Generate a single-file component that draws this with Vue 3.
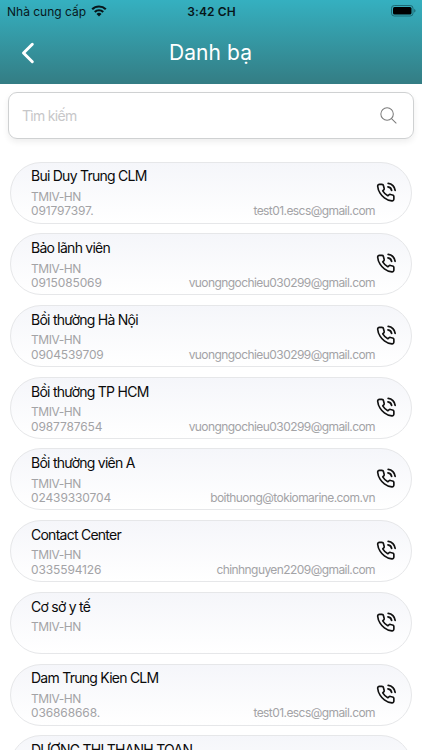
<template>
  <div class="screen">
    <header class="header">
      <div class="status-bar">
        <div class="carrier">
          <span class="carrier-name">Nhà cung cấp</span>
          <svg class="wifi" width="16" height="12" viewBox="0 0 16 12">
            <g fill="none" stroke="#07161a" stroke-width="2.2">
              <path d="M1.2 4.3a9.7 9.7 0 0 1 13.6 0"></path>
              <path d="M3.8 7a5.9 5.9 0 0 1 8.4 0"></path>
            </g>
            <path d="M8 11.4L5.5 8.9a3.6 3.6 0 0 1 5 0z" fill="#07161a"></path>
          </svg>
        </div>
        <span class="time">3:42 CH</span>
        <div class="battery">
          <svg width="25" height="12" viewBox="0 0 25 12">
            <rect x="0.5" y="0.5" width="21.5" height="10.5" rx="2.8" fill="none" stroke="#1d6a75"></rect>
            <rect x="2" y="2" width="18.5" height="7.5" rx="1.5" fill="#000"></rect>
            <path d="M23.2 4v3.6c.9-.3 1.3-1 1.3-1.8s-.4-1.5-1.3-1.8z" fill="#1d6a75"></path>
          </svg>
        </div>
      </div>
      <div class="nav-bar">
        <button class="back-btn" aria-label="Back">
          <svg width="14" height="22" viewBox="0 0 14 22" fill="none" stroke="#fff">
            <path stroke-width="3" stroke-linecap="round" stroke-linejoin="round" d="M11.3 2.3L2.5 11l8.8 8.7"></path>
          </svg>
        </button>
        <h1>Danh bạ</h1>
      </div>
    </header>

    <div class="search-box">
      <input v-model="searchTerm" type="text" placeholder="Tìm kiếm" />
      <svg class="search-icon" width="17" height="17" viewBox="0 0 18 18" fill="none" stroke="#7c7c7c" stroke-width="1.1">
        <circle cx="7.5" cy="7.5" r="6.6"></circle>
        <path stroke-linecap="round" d="M12.2 12.2l4.8 4.8"></path>
      </svg>
    </div>

    <ul class="contact-list">
      <li v-for="contact in filteredContacts" :key="contact.name" class="contact">
        <div class="info">
          <p class="name">{{ contact.name }}</p>
          <p class="branch">{{ contact.branch }}</p>
          <div class="details">
            <span class="phone">{{ contact.phone }}</span>
            <span class="email">{{ contact.email }}</span>
          </div>
        </div>
        <button class="call-btn" aria-label="Call">
          <svg width="22" height="22" viewBox="0 0 22 22" fill="none" stroke="#111" stroke-width="1.8" stroke-linecap="round" stroke-linejoin="round">
            <path transform="translate(1.2 .9) scale(.92)" d="M19.2 15.2v2.4a1.9 1.9 0 0 1-2.1 1.9c-3-.3-5.8-1.4-8.2-3.3a18 18 0 0 1-4.7-5.1A16 16 0 0 1 1.6 3.6 1.9 1.9 0 0 1 3.5 1.6h2.6a1.9 1.9 0 0 1 1.9 1.6c.1.8.3 1.6.6 2.4a1.9 1.9 0 0 1-.4 2L7.1 8.7a14.5 14.5 0 0 0 5.5 5.3l1.1-1a1.9 1.9 0 0 1 2-.4c.6.2 1.2.4 1.9.5a1.9 1.9 0 0 1 1.6 2.1z"></path>
            <path d="M13.2 1.4a7.5 7.5 0 0 1 6.9 6.9M13 4.8a4.2 4.2 0 0 1 3.6 3.6"></path>
          </svg>
        </button>
      </li>
    </ul>
  </div>
</template>

<script setup>
import { ref, computed } from 'vue';

const searchTerm = ref('');

const contacts = ref([
  { name: 'Bui Duy Trung CLM', branch: 'TMIV-HN', phone: '091797397.', email: 'test01.escs@gmail.com' },
  { name: 'Bảo lãnh viên', branch: 'TMIV-HN', phone: '0915085069', email: 'vuongngochieu030299@gmail.com' },
  { name: 'Bồi thường Hà Nội', branch: 'TMIV-HN', phone: '0904539709', email: 'vuongngochieu030299@gmail.com' },
  { name: 'Bồi thường TP HCM', branch: 'TMIV-HN', phone: '0987787654', email: 'vuongngochieu030299@gmail.com' },
  { name: 'Bồi thường viên A', branch: 'TMIV-HN', phone: '02439330704', email: 'boithuong@tokiomarine.com.vn' },
  { name: 'Contact Center', branch: 'TMIV-HN', phone: '0335594126', email: 'chinhnguyen2209@gmail.com' },
  { name: 'Cơ sở y tế', branch: 'TMIV-HN', phone: '', email: '' },
  { name: 'Dam Trung Kien CLM', branch: 'TMIV-HN', phone: '036868668.', email: 'test01.escs@gmail.com' },
  { name: 'DƯƠNG THỊ THANH TOAN', branch: 'TMIV-HN', phone: '', email: '' }
]);

const filteredContacts = computed(() => {
  const term = searchTerm.value.trim().toLowerCase();
  return contacts.value.filter((contact) => contact.name.toLowerCase().includes(term));
});
</script>

<style>
body {
  overflow: hidden;
}
</style>

<style scoped>
.screen {
  display: flex;
  flex-direction: column;
  height: 750px;
  overflow: hidden;
  background: #fff;
  font-family: Inter, "Liberation Sans", sans-serif;
  color: #111;
}

button {
  padding: 0;
  border: none;
  background: none;
  cursor: pointer;
}

svg {
  display: block;
}

.header {
  flex: none;
  height: 84px;
  background: linear-gradient(#35b0c0, #347d84);
}

.status-bar {
  display: grid;
  grid-template-columns: 1fr auto 1fr;
  align-items: center;
  height: 22px;
  padding: 0 6px 0 7px;
  color: #07161a;
}

.carrier {
  display: flex;
  align-items: center;
  gap: 5px;
}

.carrier-name {
  font-size: 12px;
}

.time {
  font-size: 12px;
  font-weight: 600;
  letter-spacing: 0.1px;
}

.battery {
  display: flex;
  justify-content: flex-end;
}

.nav-bar {
  display: grid;
  grid-template-columns: 40px 1fr 40px;
  align-items: center;
  height: 61px;
  padding: 0 22px 0 21px;
}

h1 {
  margin: 0;
  color: #fff;
  font-size: 21px;
  font-weight: 400;
  letter-spacing: 0.1px;
  text-align: center;
}

.search-box {
  display: flex;
  flex: none;
  align-items: center;
  box-sizing: border-box;
  height: 47px;
  margin: 8px 8px 0;
  padding: 0 16px 0 13px;
  border: 1px solid #cfd1d2;
  border-radius: 9px;
  box-shadow: 0 3px 6px rgba(0, 0, 0, 0.07);
}

.search-box input {
  flex: 1;
  min-width: 0;
  padding: 0;
  border: none;
  outline: none;
  background: none;
  font-family: inherit;
  font-size: 14px;
  letter-spacing: -0.7px;
}

.search-box input::placeholder {
  color: #c7c7c9;
}

.contact-list {
  display: flex;
  flex-direction: column;
  gap: 9.7px;
  margin: 0;
  padding: 22.7px 10px 0;
  list-style: none;
}

.contact {
  display: flex;
  flex: none;
  align-items: center;
  box-sizing: border-box;
  height: 62px;
  padding: 0 14px 0 20px;
  border: 1px solid #e6e7e9;
  border-radius: 31px;
  background: linear-gradient(#f5f6fa, #fff);
}

.info {
  flex: 1;
  padding-top: 1px;
}

p {
  margin: 0;
}

.name {
  margin-bottom: 4.5px;
  color: #0b0b0b;
  font-size: 14px;
  line-height: 18px;
  letter-spacing: -0.75px;
}

.branch,
.details {
  height: 14.5px;
  color: #a3a3a6;
  font-size: 12px;
  line-height: 14.5px;
  letter-spacing: -0.45px;
}

.details {
  display: flex;
  justify-content: space-between;
}

.phone {
  letter-spacing: -0.12px;
}

.email {
  letter-spacing: -0.57px;
}

.call-btn {
  width: 22px;
  height: 22px;
}
</style>
